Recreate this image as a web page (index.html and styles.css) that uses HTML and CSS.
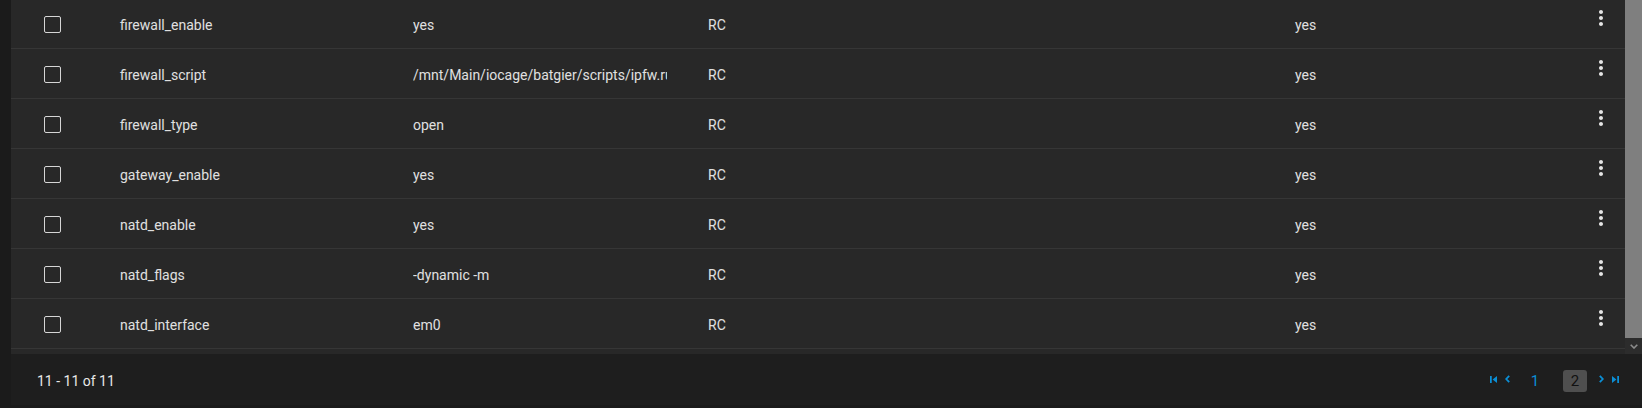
FILE: index.html
```html
<!DOCTYPE html>
<html lang="en">
<head>
  <meta charset="UTF-8">
  <title>Jail properties</title>
  <meta name="viewport" content="width=device-width, initial-scale=1.0">
  <link rel="stylesheet" href="styles.css">
</head>
<body>
  <div class="page">
    <div class="card">
      <!-- table body with its own scrollbar -->
      <div class="scroll">
        <div class="rows">
          <div class="rows-inner">
            <div class="row">
              <div class="cell-check"><span class="checkbox"></span></div>
              <div>firewall_enable</div>
              <div><span class="clip">yes</span></div>
              <div>RC</div>
              <div>yes</div>
              <div class="cell-menu"><svg viewBox="0 0 24 24"><path d="M12 8c1.1 0 2-.9 2-2s-.9-2-2-2-2 .9-2 2 .9 2 2 2zm0 2c-1.1 0-2 .9-2 2s.9 2 2 2 2-.9 2-2-.9-2-2-2zm0 6c-1.1 0-2 .9-2 2s.9 2 2 2 2-.9 2-2-.9-2-2-2z"/></svg></div>
            </div>
            <div class="row">
              <div class="cell-check"><span class="checkbox"></span></div>
              <div>firewall_script</div>
              <div><span class="clip">/mnt/Main/iocage/batgier/scripts/ipfw.rules</span></div>
              <div>RC</div>
              <div>yes</div>
              <div class="cell-menu"><svg viewBox="0 0 24 24"><path d="M12 8c1.1 0 2-.9 2-2s-.9-2-2-2-2 .9-2 2 .9 2 2 2zm0 2c-1.1 0-2 .9-2 2s.9 2 2 2 2-.9 2-2-.9-2-2-2zm0 6c-1.1 0-2 .9-2 2s.9 2 2 2 2-.9 2-2-.9-2-2-2z"/></svg></div>
            </div>
            <div class="row">
              <div class="cell-check"><span class="checkbox"></span></div>
              <div>firewall_type</div>
              <div><span class="clip">open</span></div>
              <div>RC</div>
              <div>yes</div>
              <div class="cell-menu"><svg viewBox="0 0 24 24"><path d="M12 8c1.1 0 2-.9 2-2s-.9-2-2-2-2 .9-2 2 .9 2 2 2zm0 2c-1.1 0-2 .9-2 2s.9 2 2 2 2-.9 2-2-.9-2-2-2zm0 6c-1.1 0-2 .9-2 2s.9 2 2 2 2-.9 2-2-.9-2-2-2z"/></svg></div>
            </div>
            <div class="row">
              <div class="cell-check"><span class="checkbox"></span></div>
              <div>gateway_enable</div>
              <div><span class="clip">yes</span></div>
              <div>RC</div>
              <div>yes</div>
              <div class="cell-menu"><svg viewBox="0 0 24 24"><path d="M12 8c1.1 0 2-.9 2-2s-.9-2-2-2-2 .9-2 2 .9 2 2 2zm0 2c-1.1 0-2 .9-2 2s.9 2 2 2 2-.9 2-2-.9-2-2-2zm0 6c-1.1 0-2 .9-2 2s.9 2 2 2 2-.9 2-2-.9-2-2-2z"/></svg></div>
            </div>
            <div class="row">
              <div class="cell-check"><span class="checkbox"></span></div>
              <div>natd_enable</div>
              <div><span class="clip">yes</span></div>
              <div>RC</div>
              <div>yes</div>
              <div class="cell-menu"><svg viewBox="0 0 24 24"><path d="M12 8c1.1 0 2-.9 2-2s-.9-2-2-2-2 .9-2 2 .9 2 2 2zm0 2c-1.1 0-2 .9-2 2s.9 2 2 2 2-.9 2-2-.9-2-2-2zm0 6c-1.1 0-2 .9-2 2s.9 2 2 2 2-.9 2-2-.9-2-2-2z"/></svg></div>
            </div>
            <div class="row">
              <div class="cell-check"><span class="checkbox"></span></div>
              <div>natd_flags</div>
              <div><span class="clip">-dynamic -m</span></div>
              <div>RC</div>
              <div>yes</div>
              <div class="cell-menu"><svg viewBox="0 0 24 24"><path d="M12 8c1.1 0 2-.9 2-2s-.9-2-2-2-2 .9-2 2 .9 2 2 2zm0 2c-1.1 0-2 .9-2 2s.9 2 2 2 2-.9 2-2-.9-2-2-2zm0 6c-1.1 0-2 .9-2 2s.9 2 2 2 2-.9 2-2-.9-2-2-2z"/></svg></div>
            </div>
            <div class="row">
              <div class="cell-check"><span class="checkbox"></span></div>
              <div>natd_interface</div>
              <div><span class="clip">em0</span></div>
              <div>RC</div>
              <div>yes</div>
              <div class="cell-menu"><svg viewBox="0 0 24 24"><path d="M12 8c1.1 0 2-.9 2-2s-.9-2-2-2-2 .9-2 2 .9 2 2 2zm0 2c-1.1 0-2 .9-2 2s.9 2 2 2 2-.9 2-2-.9-2-2-2zm0 6c-1.1 0-2 .9-2 2s.9 2 2 2 2-.9 2-2-.9-2-2-2z"/></svg></div>
            </div>
          </div>
        </div>
        <div class="scrollbar">
          <div class="thumb"></div>
          <div class="arrow"><svg viewBox="0 0 8 5"><polyline points="0.7,0.7 4,4 7.3,0.7"/></svg></div>
        </div>
      </div>

      <!-- paginator -->
      <div class="footer">
        <span class="range">11 - 11 of 11</span>
        <div class="pager">
          <svg class="pg-first" viewBox="0 0 8 8"><rect x="0" y="0" width="2" height="8"/><polygon points="8,0 8,8 3,4"/></svg>
          <svg class="pg-chev pg-prev" viewBox="0 0 5 8"><polyline points="4.2,0.8 1.2,4 4.2,7.2"/></svg>
          <span class="pg-num">1</span>
          <span class="pg-num current">2</span>
          <svg class="pg-chev pg-next" viewBox="0 0 5 8"><polyline points="0.8,0.8 3.8,4 0.8,7.2"/></svg>
          <svg class="pg-last" viewBox="0 0 8 8"><polygon points="0,0 0,8 5,4"/><rect x="6" y="0" width="2" height="8"/></svg>
        </div>
      </div>
    </div>
  </div>
</body>
</html>
```

FILE: styles.css
```css
body { margin: 0; background: #1b1b1b; font-family: Roboto, 'Liberation Sans', sans-serif; font-size: 14px; color: #e0e0e0; }
.page { padding-left: 11px; height: 408px; overflow: hidden; }
.card { display: flex; flex-direction: column; }

.scroll { display: flex; height: 354px; }
.rows { flex: 1; background: #282828; overflow: hidden; }
.rows-inner { margin-top: -1px; }
.row { display: grid; grid-template-columns: 109px 293px 295px 587px 1fr 48px; height: 50px; box-sizing: border-box; padding-top: 2px; border-bottom: 1px solid #363636; align-items: center; }
.cell-check { padding-left: 33px; display: flex; align-items: center; }
.checkbox { width: 15px; height: 15px; border: 1px solid #d6d6d6; border-radius: 2px; }
.clip { display: block; max-width: 254px; overflow: hidden; white-space: nowrap; }
.cell-menu { align-self: start; margin-top: 5px; display: flex; justify-content: center; }
.cell-menu svg { width: 24px; height: 24px; fill: #e6e6e6; }

.scrollbar { width: 17px; display: flex; flex-direction: column; background: #2c2c2c; }
.thumb { height: 338px; background: #7f7f7f; }
.arrow { height: 16px; display: flex; align-items: center; justify-content: center; }
.arrow svg { width: 8px; height: 5px; fill: none; stroke: #8c8c8c; stroke-width: 1.6; }

.footer { height: 51px; background: #1e1e1e; display: flex; align-items: center; padding: 0 23px 0 26px; }
.range { color: #e8e8e8; padding-top: 2px; }
.pager { margin-left: auto; display: flex; align-items: center; padding-top: 2px; }
.pager svg { fill: #0b8fd6; }
.pg-first, .pg-last { width: 7px; height: 7px; margin-top: -3px; }
.pg-chev { width: 5px; height: 8px; fill: none !important; stroke: #0b8fd6; stroke-width: 1.8; margin-top: -3px; }
.pg-prev { margin-left: 8px; margin-right: 13px; }
.pg-next { margin-left: 12px; margin-right: 8px; }
.pg-num { width: 24px; height: 22px; display: flex; align-items: center; justify-content: center; font-size: 15px; color: #0b8fd6; border-radius: 3px; padding-top: 1px; box-sizing: border-box; }
.pg-num + .pg-num { margin-left: 16px; }
.pg-num.current { background: #4f4f4f; color: #111; }
```
